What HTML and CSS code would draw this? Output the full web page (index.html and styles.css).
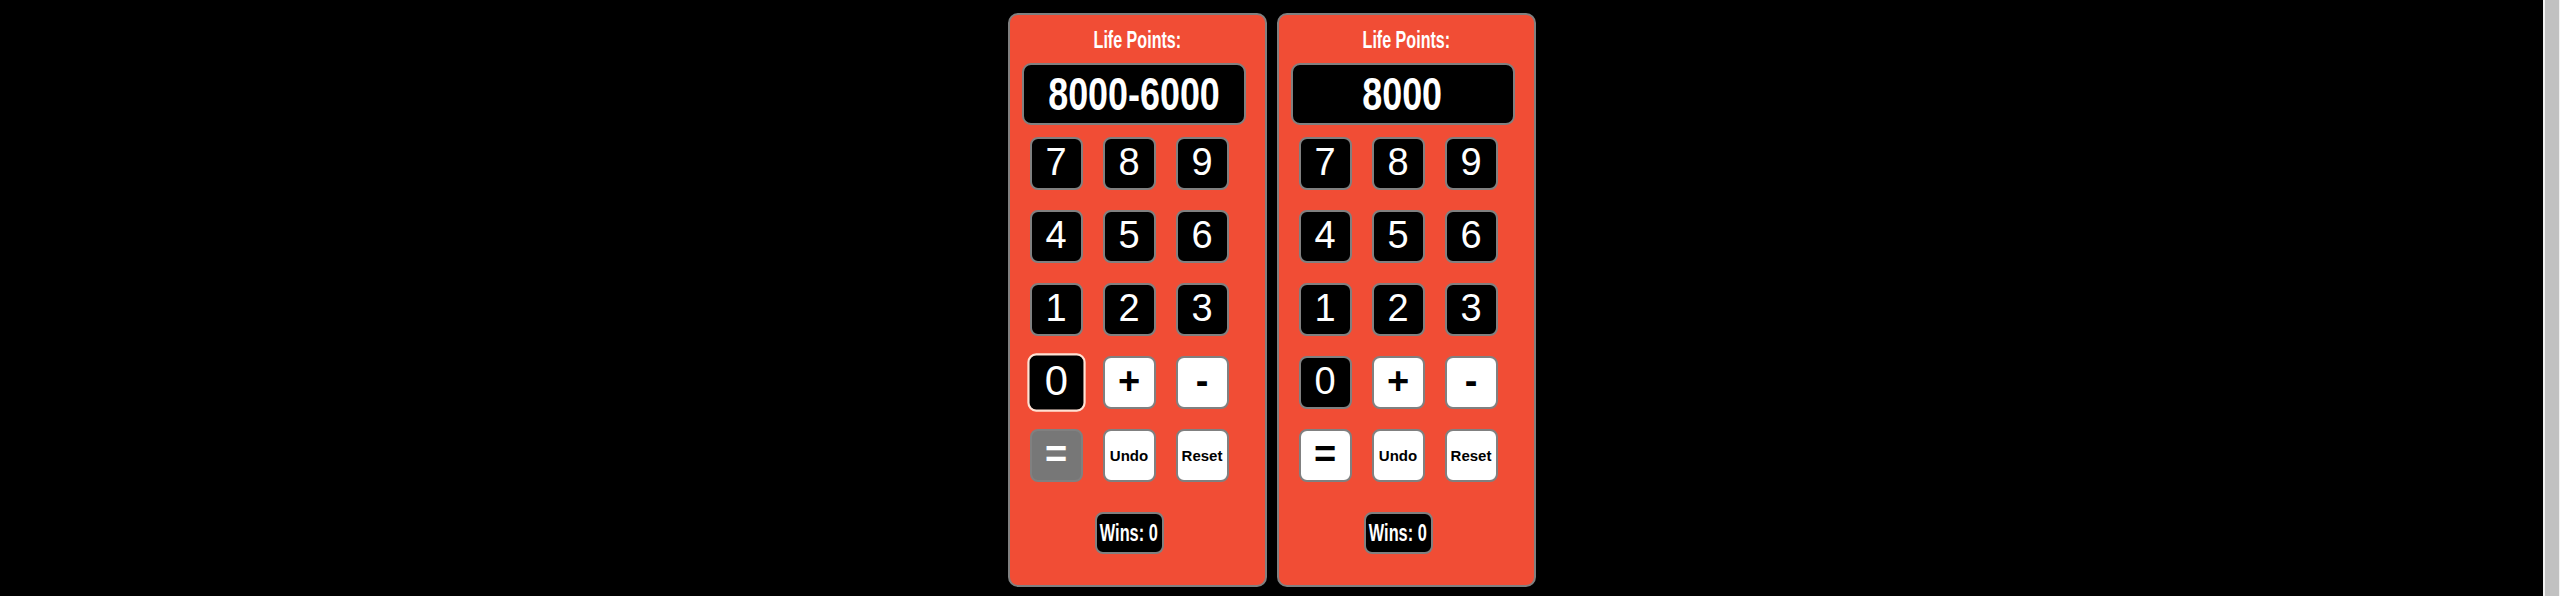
FILE: index.html
```html
<!DOCTYPE html>
<html lang="en">
<head>
<meta charset="utf-8">
<title>Life Points</title>
<link rel="stylesheet" href="styles.css">
</head>
<body>
<div class="page">
<main class="board">
  <section class="panel">
    <h2 class="title"><span class="squeeze">Life Points:</span></h2>
    <div class="display"><span class="squeeze">8000-6000</span></div>
    <div class="pad">
      <div class="keys">
        <button class="key num">7</button>
        <button class="key num">8</button>
        <button class="key num">9</button>
        <button class="key num">4</button>
        <button class="key num">5</button>
        <button class="key num">6</button>
        <button class="key num">1</button>
        <button class="key num">2</button>
        <button class="key num">3</button>
        <button class="key num hover">0</button>
        <button class="key op">+</button>
        <button class="key op">-</button>
        <button class="key op active">=</button>
        <button class="key word">Undo</button>
        <button class="key word">Reset</button>
      </div>
      <div class="wins"><span class="squeeze">Wins: 0</span></div>
    </div>
  </section>
  <section class="panel">
    <h2 class="title"><span class="squeeze">Life Points:</span></h2>
    <div class="display"><span class="squeeze">8000</span></div>
    <div class="pad">
      <div class="keys">
        <button class="key num">7</button>
        <button class="key num">8</button>
        <button class="key num">9</button>
        <button class="key num">4</button>
        <button class="key num">5</button>
        <button class="key num">6</button>
        <button class="key num">1</button>
        <button class="key num">2</button>
        <button class="key num">3</button>
        <button class="key num">0</button>
        <button class="key op">+</button>
        <button class="key op">-</button>
        <button class="key op">=</button>
        <button class="key word">Undo</button>
        <button class="key word">Reset</button>
      </div>
      <div class="wins"><span class="squeeze">Wins: 0</span></div>
    </div>
  </section>
</main>
<div class="scrollbar"><div class="thumb"></div></div>
</div>
</body>
</html>
```
FILE: styles.css
```css
html, body {
  margin: 0;
  padding: 0;
  background: #000;
}
body {
  font-family: "Liberation Sans", Arial, sans-serif;
}
.page {
  display: flex;
  height: 596px;
  overflow: hidden;
}
.board {
  flex: 1;
  display: flex;
  justify-content: center;
  align-items: flex-start;
  gap: 10px;
  padding: 13px 0 0;
}
.scrollbar {
  width: 17px;
  flex: none;
  background: #f1f1f1;
  display: flex;
  padding: 0 1px 0 2px;
  box-sizing: border-box;
}
.thumb {
  flex: 1;
  background: #c1c1c1;
}
.panel {
  box-sizing: border-box;
  width: 259px;
  height: 574px;
  background: #f14d35;
  border: 2px solid #808080;
  border-radius: 10px;
  display: flex;
  flex-direction: column;
}
.squeeze {
  display: inline-block;
  white-space: nowrap;
}
.title {
  margin: 12px 0 0;
  height: 36px;
  text-align: center;
  color: #fff;
  font-family: "Liberation Sans", Arial, sans-serif;
  font-weight: bold;
  font-size: 24px;
  line-height: 26px;
}
.title .squeeze {
  transform: scaleX(0.67);
}
.display {
  box-sizing: border-box;
  margin-left: 12px;
  width: 224px;
  height: 62px;
  background: #000;
  border: 2px solid #808080;
  border-radius: 9px;
  color: #fff;
  display: flex;
  align-items: center;
  justify-content: center;
  font-family: "Liberation Sans", Arial, sans-serif;
  font-weight: bold;
  font-size: 46px;
  line-height: 1;
}
.display .squeeze {
  transform: scaleX(0.78);
}
.pad {
  margin: 12px 0 0 20px;
  width: 199px;
  display: flex;
  flex-direction: column;
  align-items: center;
}
.keys {
  display: grid;
  grid-template-columns: repeat(3, 53px);
  grid-auto-rows: 53px;
  gap: 20px;
}
.key {
  box-sizing: border-box;
  width: 53px;
  height: 53px;
  margin: 0;
  padding: 0;
  border: 2px solid #808080;
  border-radius: 8px;
  font-family: "Liberation Sans", Arial, sans-serif;
  display: flex;
  align-items: center;
  justify-content: center;
}
.num {
  background: #000;
  color: #fff;
  font-size: 38px;
  line-height: 1;
  padding-bottom: 3px;
}
.op {
  background: #fff;
  color: #000;
  font-size: 38px;
  font-weight: bold;
  line-height: 1;
  padding-bottom: 3px;
}
.word {
  background: #fff;
  color: #000;
  font-size: 15px;
  font-weight: bold;
}
.hover {
  transform: scale(1.1);
  border-color: #ffe2d4;
}
.active {
  background: #777;
  color: #fff;
}
.wins {
  box-sizing: border-box;
  margin-top: 30px;
  width: 69px;
  height: 42px;
  background: #000;
  border: 2px solid #808080;
  border-radius: 8px;
  color: #fff;
  display: flex;
  align-items: center;
  justify-content: center;
  font-family: "Liberation Sans", Arial, sans-serif;
  font-weight: bold;
  font-size: 23px;
  line-height: 1;
}
.wins .squeeze {
  transform: scaleX(0.71);
}
```
